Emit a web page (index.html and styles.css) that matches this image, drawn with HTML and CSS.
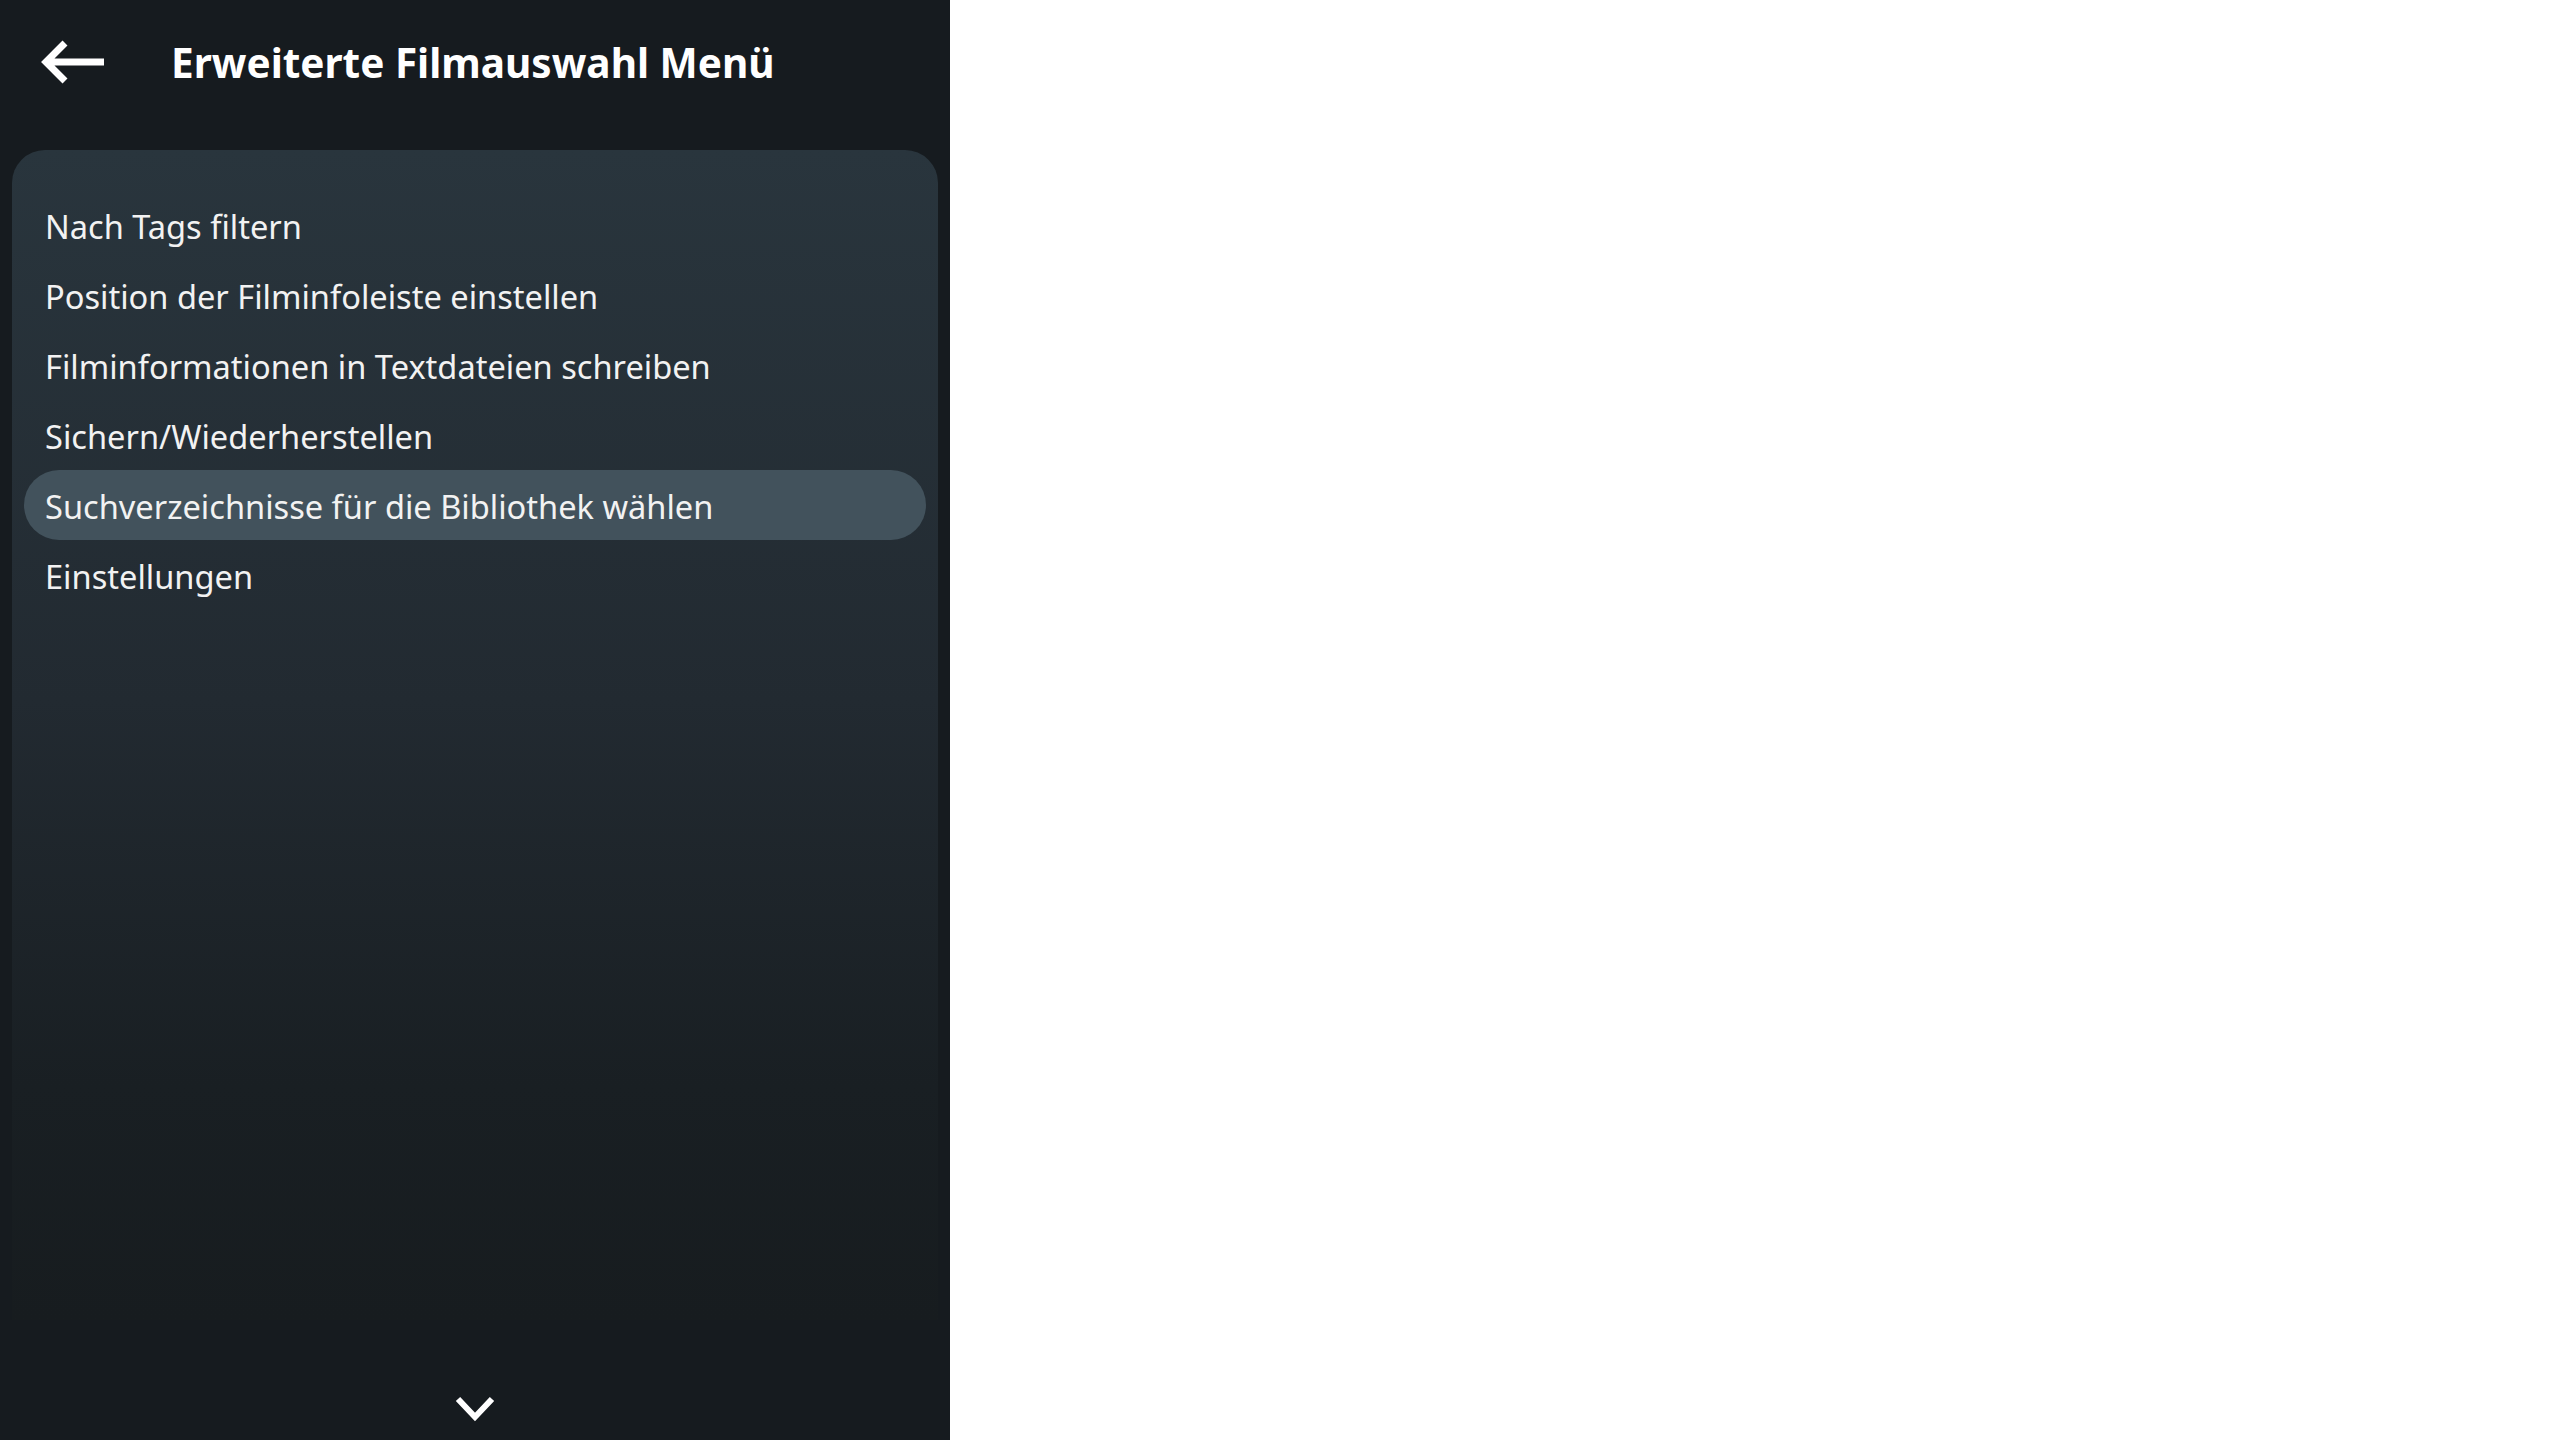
FILE: index.html
```html
<!DOCTYPE html>
<html lang="de">

<head>
    <meta charset="UTF-8">
    <meta name="viewport" content="width=device-width, initial-scale=1.0">
    <title>Erweiterte Filmauswahl Menü</title>
    <link rel="stylesheet" href="styles.css">
</head>

<body>
    <div class="panel">
        <div class="header">
            <svg class="back" width="70" height="48" viewBox="0 0 70 48">
                <path d="M66 24 H7 M27 5 L8 24 L27 43" fill="none" stroke="#fff" stroke-width="7" />
            </svg>
            <h1>Erweiterte Filmauswahl Menü</h1>
        </div>
        <div class="card">
            <div class="item">Nach Tags filtern</div>
            <div class="item">Position der Filminfoleiste einstellen</div>
            <div class="item">Filminformationen in Textdateien schreiben</div>
            <div class="item">Sichern/Wiederherstellen</div>
            <div class="item selected">Suchverzeichnisse für die Bibliothek wählen</div>
            <div class="item">Einstellungen</div>
        </div>
        <div class="footer">
            <svg width="44" height="28" viewBox="0 0 44 28">
                <path d="M5 5 L22 23 L39 5" fill="none" stroke="#fff" stroke-width="6" />
            </svg>
        </div>
    </div>
    <div class="rest"></div>
</body>

</html>
```

FILE: styles.css
```css
body {
    display: flex;
    margin: 0;
    height: 100vh;
    background-color: #fff;
    font-family: "Noto Sans", "Open Sans", sans-serif;
}

.panel {
    width: 950px;
    height: 1440px;
    background-color: #161b1f;
    display: flex;
    flex-direction: column;
}

.rest {
    flex: 1;
}

.header {
    height: 124px;
    display: flex;
    align-items: center;
    padding-left: 38px;
}

.header .back {
    margin-right: 63px;
}

h1 {
    margin: 1px 0 0 0;
    font-size: 40.5px;
    font-weight: bold;
    color: #fff;
}

.card {
    margin: 26px 12px 0 12px;
    height: 1170px;
    box-sizing: border-box;
    padding: 40px 12px;
    border-radius: 33px 33px 0 0;
    background: linear-gradient(#29353d 0%, #222a31 47%, #191f23 80%, #171c1f 100%);
}

.item {
    height: 70px;
    line-height: 70px;
    padding: 2px 21px 0 21px;
    box-sizing: border-box;
    border-radius: 35px;
    font-size: 32.6px;
    color: #f2f2f2;
}

.item.selected {
    background-color: #42525c;
}

.footer {
    flex: 1;
    display: flex;
    justify-content: center;
    align-items: flex-start;
    padding-top: 74px;
}
```
